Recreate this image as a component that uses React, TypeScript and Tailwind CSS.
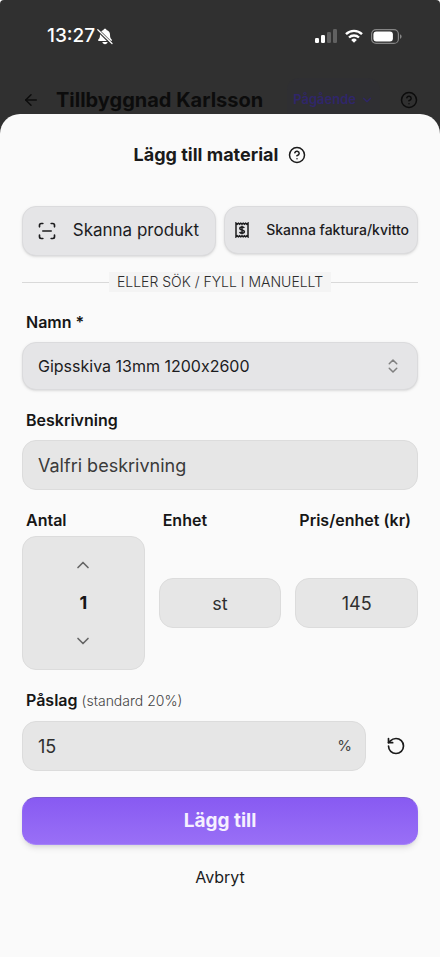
import { useState } from "react";
import type { ReactNode } from "react";
import {
  ArrowLeft,
  ChevronDown,
  ChevronsUpDown,
  ChevronUp,
  CircleQuestionMark,
  RotateCcw,
  ScanLine,
} from "lucide-react";

const DEFAULT_MARKUP = "20";

const fieldClass =
  "w-full rounded-[14px] border border-[#dcdcdc] bg-[#e6e6e6] text-lg text-[#2f2f2f] outline-none placeholder:text-[#3a3a3a]";

function BellOffIcon() {
  return (
    <svg viewBox="0 0 16 17" className="h-[17px] w-4" aria-hidden="true">
      <path
        d="M8 .8c.8 0 1.400.5 1.500 1.200 2.300.6 3.500 2.300 3.500 4.500 0 3.100.6 4 1.700 5.100.4.400.300 1.500-.6 1.500H1.900c-.9 0-1-1.100-.6-1.500C2.400 10.500 3 9.600 3 6.500c0-2.200 1.200-3.900 3.500-4.500C6.600 1.300 7.200.8 8 .8Z"
        fill="#fff"
      />
      <path d="M5.400 14h5.200c-.2 1.300-1.200 2.200-2.600 2.200S5.600 15.300 5.400 14Z" fill="#fff" />
      <path d="M.6 1.700 14.800 15.900" stroke="#303030" strokeWidth="3" />
      <path d="M.8 1.700 15 15.500" stroke="#fff" strokeWidth="1.200" strokeLinecap="round" />
    </svg>
  );
}

function SignalIcon() {
  return (
    <svg viewBox="0 0 22 14" className="h-3.5 w-[22px]" aria-hidden="true">
      <rect x="0" y="9" width="4" height="5" rx="1.200" fill="#fff" />
      <rect x="6" y="6" width="4" height="8" rx="1.200" fill="#fff" />
      <rect x="12" y="3" width="4" height="11" rx="1.200" fill="#616161" />
      <rect x="18" y="0" width="4" height="14" rx="1.200" fill="#616161" />
    </svg>
  );
}

function WifiIcon() {
  return (
    <svg viewBox="0 0 18 14" className="h-3.5 w-[18px]" fill="none" aria-hidden="true">
      <path d="M1 5.200a11.400 11.400 0 0 1 16 0" stroke="#fff" strokeWidth="2.400" />
      <path d="M4 8.500a7.200 7.200 0 0 1 10 0" stroke="#fff" strokeWidth="2.300" />
      <path d="M9 13.700 6.200 10.900a4 4 0 0 1 5.600 0Z" fill="#fff" />
    </svg>
  );
}

function BatteryIcon() {
  return (
    <svg viewBox="0 0 31 15" className="h-[15px] w-[31px]" fill="none" aria-hidden="true">
      <rect x=".6" y=".6" width="26.800" height="13.800" rx="4.500" stroke="#858585" strokeWidth="1.200" />
      <rect x="2.400" y="2.400" width="19.500" height="10.200" rx="3" fill="#fff" />
      <path d="M29 5.200c1.100.4 1.600 1.300 1.600 2.300s-.5 1.900-1.600 2.300Z" fill="#858585" />
    </svg>
  );
}

function ReceiptIcon() {
  return (
    <svg viewBox="0 0 14 16" className="h-4 w-3.5 shrink-0" fill="none" aria-hidden="true">
      <path
        d="M1 1.200 2.200 2.200 3.400 1.200 4.600 2.200 5.800 1.200 7 2.200 8.200 1.200 9.400 2.200 10.600 1.200 11.800 2.200 13 1.200v13.600l-1.200-1-1.200 1-1.200-1-1.200 1-1.200-1-1.200 1-1.200-1-1.200 1-1.200-1-1.200 1Z"
        stroke="#1c1c1e"
        strokeWidth="1.500"
      />
      <path
        d="M9.300 5.900C8.800 5.200 8 4.900 7 4.900c-1.300 0-2.200.5-2.200 1.500 0 2.100 4.600 1 4.600 3.200 0 1-.9 1.600-2.300 1.600-1.100 0-2-.4-2.500-1.200M7 3.800v8.500"
        stroke="#1c1c1e"
        strokeWidth="1.500"
      />
    </svg>
  );
}

function StatusBar() {
  return (
    <div className="flex h-[72px] items-center justify-between pr-[38px] pl-[47px] text-white">
      <div className="flex items-center gap-0.5">
        <span className="text-[19px] font-medium">13:27</span>
        <BellOffIcon />
      </div>
      <div className="flex items-center gap-2">
        <SignalIcon />
        <WifiIcon />
        <BatteryIcon />
      </div>
    </div>
  );
}

function ProjectHeader() {
  return (
    <header className="flex h-14 items-center px-[22px] text-[#0c0c0c]">
      <button type="button" aria-label="Tillbaka">
        <ArrowLeft className="size-[18px]" />
      </button>
      <h1 className="ml-4 flex-1 text-xl font-bold whitespace-nowrap">Tillbyggnad Karlsson</h1>
      <button
        type="button"
        className="flex h-11 items-center gap-1 rounded-xl bg-[#2f2f32] px-1.5 text-[13px] font-semibold text-[#30266a]"
      >
        Pågående
        <ChevronDown className="size-3.5" />
      </button>
      <button type="button" aria-label="Hjälp" className="ml-5">
        <CircleQuestionMark className="size-[18px]" />
      </button>
    </header>
  );
}

function Label({ htmlFor, children }: { htmlFor: string; children: ReactNode }) {
  return (
    <label htmlFor={htmlFor} className="block px-1 text-base leading-5 font-semibold whitespace-nowrap text-[#161616]">
      {children}
    </label>
  );
}

export default function App() {
  const [name, setName] = useState("Gipsskiva 13mm 1200x2600");
  const [description, setDescription] = useState("");
  const [quantity, setQuantity] = useState(1);
  const [unit, setUnit] = useState("st");
  const [price, setPrice] = useState("145");
  const [markup, setMarkup] = useState("15");

  return (
    <div className="min-h-screen bg-white font-['Inter',sans-serif]">
      <div className="flex min-h-screen flex-col rounded-t bg-[#303030]">
        <StatusBar />
        <ProjectHeader />

        {/* Bottom sheet, slides over the project header */}
        <main className="relative -mt-3.5 flex-1 rounded-t-[20px] bg-[#fafafa] px-[22px] pt-7 pb-14">
          <div className="flex items-center justify-center gap-2.5 text-[#1a1a1a]">
            <h2 className="text-lg leading-[26px] font-bold">Lägg till material</h2>
            <button type="button" aria-label="Hjälp om material">
              <CircleQuestionMark className="size-[18px]" />
            </button>
          </div>

          <form onSubmit={(e) => e.preventDefault()}>
            {/* Scan actions */}
            <div className="mt-[38px] grid grid-cols-2 items-start gap-2 text-[#1c1c1e]">
              <button
                type="button"
                className="flex h-[50px] items-center rounded-[14px] border border-[#dbdbdd] bg-[#e5e5e7] px-3.5 shadow-sm"
              >
                <ScanLine className="size-5 shrink-0" />
                <span className="flex-1 pr-0.5 text-right text-[17px] whitespace-nowrap">Skanna produkt</span>
              </button>
              <button
                type="button"
                className="flex h-12 items-center rounded-[14px] border border-[#dbdbdd] bg-[#e5e5e7] pr-2 pl-2.5 shadow-sm"
              >
                <ReceiptIcon />
                <span className="flex-1 text-right text-sm font-medium whitespace-nowrap">Skanna faktura/kvitto</span>
              </button>
            </div>

            <div className="mt-4 flex items-center">
              <div className="h-px flex-1 bg-[#d9d9d9]" />
              <span className="bg-[#f4f4f4] px-2 text-sm font-light text-[#2c2c2c]">ELLER SÖK / FYLL I MANUELLT</span>
              <div className="h-px flex-1 bg-[#d9d9d9]" />
            </div>

            <div className="mt-5 flex flex-col gap-5">
              <div className="flex flex-col gap-2.5">
                <Label htmlFor="name">Namn *</Label>
                <div className="relative">
                  <select
                    id="name"
                    value={name}
                    onChange={(e) => setName(e.target.value)}
                    className="h-12 w-full appearance-none rounded-[14px] border border-[#dbdbdd] bg-[#e5e5e7] px-[15px] text-base text-[#1c1c1e] shadow-sm outline-none [font-feature-settings:'calt'_0]"
                  >
                    <option>Gipsskiva 13mm 1200x2600</option>
                  </select>
                  <ChevronsUpDown className="pointer-events-none absolute top-[15px] right-4 size-[18px] text-[#808080]" />
                </div>
              </div>

              <div className="flex flex-col gap-2.5">
                <Label htmlFor="description">Beskrivning</Label>
                <input
                  id="description"
                  placeholder="Valfri beskrivning"
                  value={description}
                  onChange={(e) => setDescription(e.target.value)}
                  className={`${fieldClass} h-[50px] px-[15px]`}
                />
              </div>

              <div className="grid grid-cols-3 gap-x-3.5 gap-y-1.5">
                <Label htmlFor="quantity">Antal</Label>
                <Label htmlFor="unit">Enhet</Label>
                <Label htmlFor="price">Pris/enhet (kr)</Label>

                <div className="flex h-[134px] flex-col items-center justify-between rounded-[14px] border border-[#dcdcdc] bg-[#e6e6e6] py-[18px] text-[#666]">
                  <button type="button" aria-label="Öka antal" onClick={() => setQuantity(quantity + 1)}>
                    <ChevronUp className="size-5" />
                  </button>
                  <input
                    id="quantity"
                    inputMode="numeric"
                    value={quantity}
                    onChange={(e) => setQuantity(Number(e.target.value) || 0)}
                    className="w-full bg-transparent text-center text-lg font-bold text-[#161616] outline-none"
                  />
                  <button type="button" aria-label="Minska antal" onClick={() => setQuantity(Math.max(0, quantity - 1))}>
                    <ChevronDown className="size-5" />
                  </button>
                </div>
                <input
                  id="unit"
                  value={unit}
                  onChange={(e) => setUnit(e.target.value)}
                  className={`${fieldClass} h-[50px] self-center px-3 text-center`}
                />
                <input
                  id="price"
                  inputMode="decimal"
                  value={price}
                  onChange={(e) => setPrice(e.target.value)}
                  className={`${fieldClass} h-[50px] self-center px-3 text-center`}
                />
              </div>

              <div className="flex flex-col gap-2.5">
                <Label htmlFor="markup">
                  Påslag <span className="text-sm font-light text-[#444]">(standard 20%)</span>
                </Label>
                <div className="flex items-center gap-2">
                  <div className="relative flex-1">
                    <input
                      id="markup"
                      inputMode="decimal"
                      value={markup}
                      onChange={(e) => setMarkup(e.target.value)}
                      className={`${fieldClass} block h-[50px] pr-10 pl-[15px]`}
                    />
                    <span className="pointer-events-none absolute inset-y-0 right-3.5 flex items-center text-[15px] text-[#444]">
                      %
                    </span>
                  </div>
                  <button
                    type="button"
                    aria-label="Återställ påslag"
                    onClick={() => setMarkup(DEFAULT_MARKUP)}
                    className="flex size-11 items-center justify-center text-[#1a1a1a]"
                  >
                    <RotateCcw className="size-5" />
                  </button>
                </div>
              </div>
            </div>

            <button
              type="submit"
              className="mt-[26px] h-12 w-full rounded-[14px] border border-t-[#7c5bd0] border-r-[#9068f4] border-b-[#a583f8] border-l-[#9068f4] bg-linear-to-b from-[#885af2] to-[#996ff6] text-[19px] font-bold text-[#f5f0ff] shadow-md"
            >
              Lägg till
            </button>
            <button type="button" className="mt-2.5 h-11 w-full text-base text-[#1c1c1e]">
              Avbryt
            </button>
          </form>
        </main>
      </div>
    </div>
  );
}
